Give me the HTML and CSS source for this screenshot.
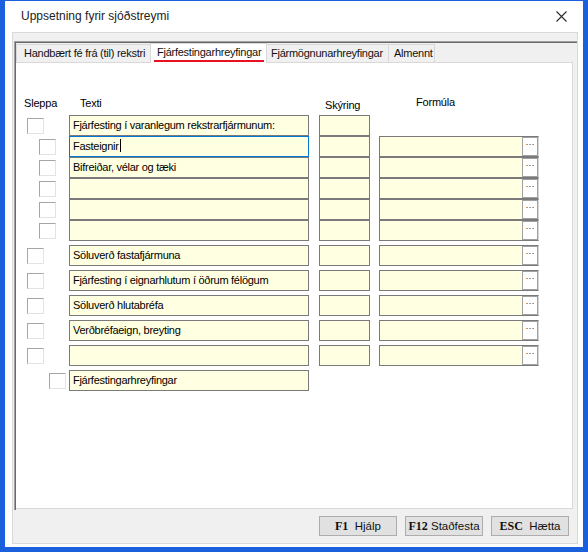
FILE: index.html
```html
<!DOCTYPE html>
<html lang="is">
<head>
    <meta charset="UTF-8">
    <title>Uppsetning fyrir sjóðstreymi</title>
    <link rel="stylesheet" href="styles.css">
</head>
<body>
    <div class="window">
        <div class="titlebar">
            <span class="title">Uppsetning fyrir sjóðstreymi</span>
            <svg class="close" width="11" height="11" viewBox="0 0 11 11">
                <path d="M0.5 0.5 L10.5 10.5 M10.5 0.5 L0.5 10.5" stroke="#2b2b2b" stroke-width="1.1" fill="none"/>
            </svg>
        </div>

        <div class="panel">
            <div class="frame">
                <div class="tabs">
                    <div class="tab tab-1">Handbært fé frá (til) rekstri</div>
                    <div class="tab tab-2 active"><span class="label">Fjárfestingarhreyfingar</span></div>
                    <div class="tab tab-3">Fjármögnunarhreyfingar</div>
                    <div class="tab tab-4">Almennt</div>
                </div>

                <div class="page">
                    <div class="heads">
                        <span class="h-sleppa">Sleppa</span>
                        <span class="h-texti">Texti</span>
                        <span class="h-skyring">Skýring</span>
                        <span class="h-formula">Formúla</span>
                    </div>

                    <!-- Fjárfesting í varanlegum rekstrarfjármunum -->
                    <div class="group">
                        <div class="row">
                            <div class="chk-cell lvl-0"><span class="chk"></span></div>
                            <div class="field">Fjárfesting í varanlegum rekstrarfjármunum:</div>
                            <div class="sky"></div>
                        </div>
                        <div class="row">
                            <div class="chk-cell lvl-1"><span class="chk"></span></div>
                            <div class="field focus">Fasteignir<span class="caret"></span></div>
                            <div class="sky"></div>
                            <div class="formula"><div class="ftext"></div><div class="dots">···</div></div>
                        </div>
                        <div class="row">
                            <div class="chk-cell lvl-1"><span class="chk"></span></div>
                            <div class="field">Bifreiðar, vélar og tæki</div>
                            <div class="sky"></div>
                            <div class="formula"><div class="ftext"></div><div class="dots">···</div></div>
                        </div>
                        <div class="row">
                            <div class="chk-cell lvl-1"><span class="chk"></span></div>
                            <div class="field"></div>
                            <div class="sky"></div>
                            <div class="formula"><div class="ftext"></div><div class="dots">···</div></div>
                        </div>
                        <div class="row">
                            <div class="chk-cell lvl-1"><span class="chk"></span></div>
                            <div class="field"></div>
                            <div class="sky"></div>
                            <div class="formula"><div class="ftext"></div><div class="dots">···</div></div>
                        </div>
                        <div class="row">
                            <div class="chk-cell lvl-1"><span class="chk"></span></div>
                            <div class="field"></div>
                            <div class="sky"></div>
                            <div class="formula"><div class="ftext"></div><div class="dots">···</div></div>
                        </div>
                    </div>

                    <div class="group spaced">
                        <div class="row">
                            <div class="chk-cell lvl-0"><span class="chk"></span></div>
                            <div class="field">Söluverð fastafjármuna</div>
                            <div class="sky"></div>
                            <div class="formula"><div class="ftext"></div><div class="dots">···</div></div>
                        </div>
                        <div class="row">
                            <div class="chk-cell lvl-0"><span class="chk"></span></div>
                            <div class="field">Fjárfesting í eignarhlutum í öðrum félögum</div>
                            <div class="sky"></div>
                            <div class="formula"><div class="ftext"></div><div class="dots">···</div></div>
                        </div>
                        <div class="row">
                            <div class="chk-cell lvl-0"><span class="chk"></span></div>
                            <div class="field">Söluverð hlutabréfa</div>
                            <div class="sky"></div>
                            <div class="formula"><div class="ftext"></div><div class="dots">···</div></div>
                        </div>
                        <div class="row">
                            <div class="chk-cell lvl-0"><span class="chk"></span></div>
                            <div class="field">Verðbréfaeign, breyting</div>
                            <div class="sky"></div>
                            <div class="formula"><div class="ftext"></div><div class="dots">···</div></div>
                        </div>
                        <div class="row">
                            <div class="chk-cell lvl-0"><span class="chk"></span></div>
                            <div class="field"></div>
                            <div class="sky"></div>
                            <div class="formula"><div class="ftext"></div><div class="dots">···</div></div>
                        </div>
                        <div class="row">
                            <div class="chk-cell lvl-2"><span class="chk"></span></div>
                            <div class="field">Fjárfestingarhreyfingar</div>
                        </div>
                    </div>
                </div>
            </div>

            <div class="buttons">
                <button class="btn"><b>F1</b>&nbsp; Hjálp</button>
                <button class="btn"><b>F12</b> Staðfesta</button>
                <button class="btn"><b>ESC</b>&nbsp; Hætta</button>
            </div>
        </div>
    </div>
</body>
</html>
```

FILE: styles.css
```css
body {
    margin: 0;
    background: #fff;
    font-family: 'Liberation Sans', Arial, sans-serif;
    color: #000;
}

.window {
    width: 588px;
    height: 552px;
    box-sizing: border-box;
    border: 5px solid #1a5fdc;
    border-top-width: 1px;
    background: #fff;
    display: flex;
    flex-direction: column;
}

.titlebar {
    height: 31px;
    display: flex;
    align-items: center;
    justify-content: space-between;
    padding: 0 16px 0 16px;
    flex-shrink: 0;
}

.title {
    font-size: 12px;
    color: #222;
    margin-top: -1px;
}

.close {
    display: block;
}

.panel {
    margin: 0 5px 3px 7px;
    height: 512px;
    box-sizing: border-box;
    border: 1px solid #d9d9d9;
    background: #f0f0f0;
    display: flex;
    flex-direction: column;
}

.frame {
    margin: 8px 0 0 1px;
    height: 469px;
    box-sizing: border-box;
    border-top: 1px solid #a0a0a0;
    border-left: 1px solid #a0a0a0;
    box-shadow: inset 1px 1px 0 #696969;
    padding: 1px 0 0 1px;
    display: flex;
    flex-direction: column;
}

/* Tabs */
.tabs {
    height: 19px;
    display: flex;
    align-items: flex-end;
    position: relative;
    z-index: 1;
    flex-shrink: 0;
}

.tab {
    height: 18px;
    box-sizing: border-box;
    border: 1px solid #d9d9d9;
    border-bottom: none;
    border-right: none;
    background: #f0f0f0;
    font-size: 11px;
    letter-spacing: -0.25px;
    line-height: 17px;
    white-space: nowrap;
    overflow: hidden;
    color: #111;
}

.tab-1 { width: 134px; padding-left: 7px; }
.tab-2 { width: 117px; padding-left: 3px; }
.tab-3 { width: 121px; padding-left: 4px; }
.tab-4 { width: 47px; padding-left: 5px; border-right: 1px solid #d9d9d9; }

.tab.active {
    height: 20px;
    margin-bottom: -1px;
    background: #fff;
    line-height: 16px;
    border-right: 1px solid #d9d9d9;
}

.tab.active + .tab {
    border-left: none;
}

.tab .label {
    display: inline-block;
    padding: 0 3px 1px;
    border-bottom: 2px solid #e81123;
    line-height: 14px;
}

.page {
    width: 557px;
    height: 447px;
    box-sizing: border-box;
    background: #fff;
    border-top: 1px solid #d9d9d9;
    border-right: 1px solid #d9d9d9;
    border-bottom: 1px solid #d9d9d9;
    padding-top: 33px;
}

.heads {
    height: 19px;
    display: flex;
    align-items: flex-start;
    font-size: 11px;
    line-height: 13px;
    letter-spacing: -0.2px;
}

.h-sleppa { margin-left: 8px; padding-top: 1px; width: 56px; }
.h-texti { padding-top: 1px; width: 245px; }
.h-skyring { padding-top: 3px; width: 91px; }
.h-formula { padding-top: 0; }

/* Rows */
.group.spaced {
    margin-top: 4px;
    display: flex;
    flex-direction: column;
    gap: 4px;
}

.row {
    height: 21px;
    display: flex;
}

.chk-cell {
    width: 53px;
    box-sizing: border-box;
    padding-top: 3px;
}

.lvl-0 { padding-left: 11px; }
.lvl-1 { padding-left: 23px; }
.lvl-2 { padding-left: 33px; }

.chk {
    display: block;
    width: 15px;
    height: 14px;
    border-top: 1px solid #a6a6a6;
    border-left: 1px solid #a6a6a6;
    border-right: 1px solid #e3e3e3;
    border-bottom: 1px solid #e3e3e3;
}

.field {
    width: 240px;
    box-sizing: border-box;
    border: 1px solid #7a7a7a;
    background: #ffffe1;
    font-size: 11px;
    letter-spacing: -0.27px;
    line-height: 19px;
    padding-left: 3px;
    white-space: nowrap;
    overflow: hidden;
}

.field.focus {
    border-color: #0078d7;
}

.caret {
    display: inline-block;
    width: 1px;
    height: 13px;
    margin-left: 1px;
    background: #000;
    vertical-align: -2px;
}

.sky {
    width: 51px;
    margin-left: 10px;
    box-sizing: border-box;
    border: 1px solid #7a7a7a;
    background: #ffffe1;
}

.formula {
    width: 160px;
    margin-left: 9px;
    box-sizing: border-box;
    border: 1px solid #7a7a7a;
    border-right-color: #d6d6d6;
    display: flex;
}

.ftext {
    flex: 1;
    background: #ffffe1;
}

.dots {
    width: 16px;
    box-sizing: border-box;
    background: #fff;
    border: 1px solid #a0a0a0;
    font-size: 9px;
    line-height: 12px;
    text-align: center;
    color: #222;
    letter-spacing: 0;
}

/* Buttons */
.buttons {
    display: flex;
    justify-content: flex-end;
    gap: 8px;
    padding: 6px 8px 0 0;
}

.btn {
    width: 78px;
    height: 20px;
    margin: 0;
    padding: 0;
    box-sizing: border-box;
    border: 1px solid #adadad;
    background: #e1e1e1;
    font-family: 'Liberation Sans', Arial, sans-serif;
    font-size: 11.5px;
    color: #111;
    line-height: 17px;
}

.btn b {
    font-family: 'Liberation Serif', serif;
    font-size: 12px;
}
```
